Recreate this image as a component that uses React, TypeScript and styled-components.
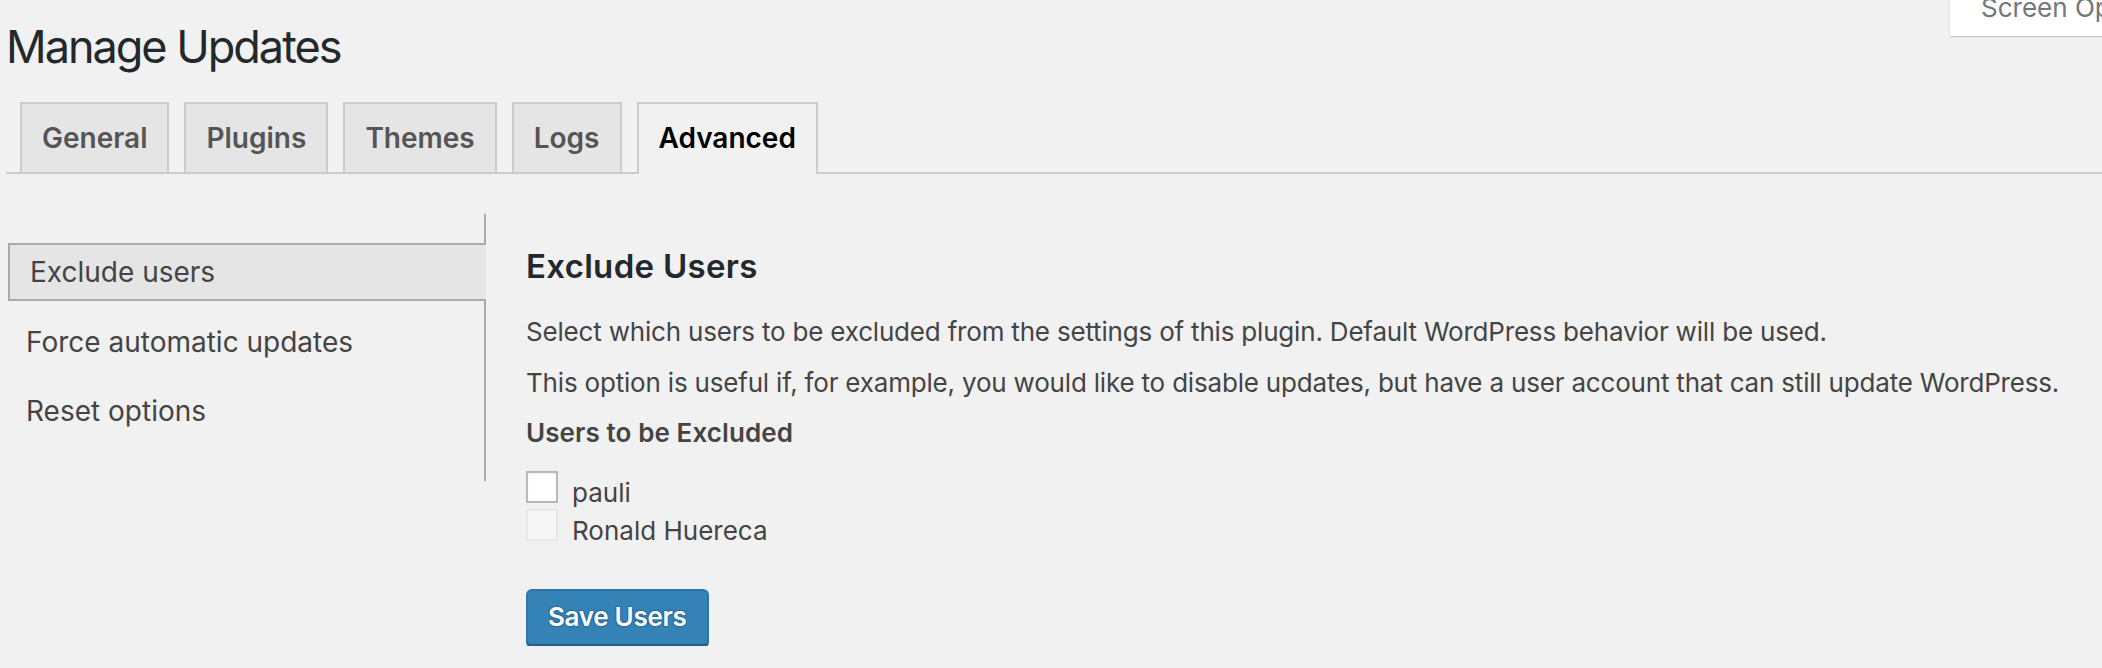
import React from "react";
import styled, { createGlobalStyle, css } from "styled-components";

const GlobalStyle = createGlobalStyle`
  html, body {
    margin: 0;
    padding: 0;
    background: #f1f1f1;
    overflow-x: hidden;
  }
  body {
    font-family: Inter, "Noto Sans", "Liberation Sans", sans-serif;
    color: #444;
  }
  *, *::before, *::after { box-sizing: border-box; }
`;

const Page = styled.div`
  padding-left: 6px;
`;

const TitleRow = styled.header`
  display: flex;
  align-items: flex-start;
`;

const Title = styled.h1`
  margin: 0;
  padding: 18px 0 8px;
  font-size: 45px;
  line-height: 58px;
  font-weight: 400;
  letter-spacing: -2px;
  color: #23282d;
`;

const ScreenOptions = styled.button`
  margin-left: auto;
  margin-top: -12px;
  margin-right: -130px;
  width: 283px;
  padding: 0 0 9px 31px;
  border: none;
  border-left: 1px solid #e2e2e2;
  background: #fff;
  box-shadow: 0 2px 1px -1px rgba(0, 0, 0, 0.18);
  font-family: inherit;
  font-size: 26px;
  line-height: 39px;
  color: #72777c;
  text-align: left;
  white-space: nowrap;
`;

const TabBar = styled.nav`
  display: flex;
  align-items: flex-end;
  gap: 15px;
  padding: 18px 0 0 14px;
  border-bottom: 2px solid #ccc;
`;

const Tab = styled.a<{ $active?: boolean }>`
  display: block;
  padding: 10px 20px;
  font-size: 28px;
  line-height: 48px;
  font-weight: 600;
  border: 2px solid #ccc;
  border-bottom: none;
  text-decoration: none;
  background: #e5e5e5;
  color: #555;
  ${(p) =>
    p.$active &&
    css`
      background: #f1f1f1;
      color: #000;
      padding-bottom: 12px;
      margin-bottom: -2px;
    `}
`;

const Body = styled.div`
  display: flex;
  align-items: flex-start;
  padding: 40px 0 0 2px;
`;

const Sidebar = styled.ul`
  list-style: none;
  margin: 0;
  padding: 29px 0 41px;
  width: 478px;
  flex: none;
  border-right: 2px solid #aaa;
  display: flex;
  flex-direction: column;
  gap: 11.5px;
`;

const SideItem = styled.li<{ $active?: boolean }>`
  height: 58px;
  display: flex;
  align-items: center;
  padding-left: 18px;
  font-size: 28px;
  color: #444;
  ${(p) =>
    p.$active &&
    css`
      padding-left: 20px;
      background: #e5e5e5;
      border: 2px solid #aaa;
      border-right: none;
      margin-right: -2px;
    `}
`;

const Content = styled.section`
  padding: 32px 0 0 40px;
`;

const Heading = styled.h2`
  margin: 0 0 26px;
  font-size: 33px;
  line-height: 40px;
  font-weight: 600;
  letter-spacing: 0.3px;
  color: #23282d;
`;

const Desc = styled.p`
  margin: 0 0 11.5px;
  font-size: 26px;
  line-height: 39px;
  letter-spacing: -0.19px;
  color: #444;
`;

const Subheading = styled.p`
  margin: 0 0 19px;
  font-size: 26px;
  line-height: 39px;
  font-weight: 600;
  letter-spacing: 0.1px;
  color: #444;
`;

const UserList = styled.div`
  display: flex;
  flex-direction: column;
  gap: 6px;
`;

const UserRow = styled.label`
  display: flex;
  align-items: flex-start;
  gap: 14px;
  height: 32px;
`;

const Checkbox = styled.input.attrs({ type: "checkbox" })`
  appearance: none;
  -webkit-appearance: none;
  margin: 0;
  width: 32px;
  height: 32px;
  flex: none;
  border: 2px solid #b4b9be;
  background: #fff;
  border-radius: 0;
  box-shadow: inset 0 1px 2px rgba(0, 0, 0, 0.07);
  &:disabled {
    border-color: #e6e7e8;
    background: #f6f6f6;
    box-shadow: none;
  }
`;

const UserName = styled.span`
  margin-top: 5.5px;
  font-size: 26px;
  line-height: 32px;
  color: #444;
`;

const PrimaryButton = styled.button`
  margin-top: 48px;
  height: 57px;
  padding: 0 20px 2px;
  font-family: inherit;
  font-size: 26px;
  font-weight: 600;
  letter-spacing: -0.3px;
  color: #fff;
  background: #3582b6;
  border: 2px solid #2f75a8;
  border-bottom-color: #255f8c;
  border-radius: 6px;
  box-shadow: 0 2px 0 #29679a;
  text-shadow: 0 -1px 1px #2a6a9b, 1px 0 1px #2a6a9b, 0 1px 1px #2a6a9b,
    -1px 0 1px #2a6a9b;
`;

const tabs = ["General", "Plugins", "Themes", "Logs", "Advanced"];
const sideItems = ["Exclude users", "Force automatic updates", "Reset options"];

export default function App() {
  return (
    <>
      <GlobalStyle />
      <Page>
        <TitleRow>
          <Title>Manage Updates</Title>
          <ScreenOptions>Screen Options</ScreenOptions>
        </TitleRow>
        <TabBar>
          {tabs.map((t) => (
            <Tab key={t} $active={t === "Advanced"}>
              {t}
            </Tab>
          ))}
        </TabBar>
        <Body>
          <Sidebar>
            {sideItems.map((s, i) => (
              <SideItem key={s} $active={i === 0}>
                {s}
              </SideItem>
            ))}
          </Sidebar>
          <Content>
            <Heading>Exclude Users</Heading>
            <Desc>
              Select which users to be excluded from the settings of this plugin. Default
              WordPress behavior will be used.
            </Desc>
            <Desc>
              This option is useful if, for example, you would like to disable updates, but
              have a user account that can still update WordPress.
            </Desc>
            <Subheading>Users to be Excluded</Subheading>
            <UserList>
              <UserRow>
                <Checkbox />
                <UserName>pauli</UserName>
              </UserRow>
              <UserRow>
                <Checkbox disabled />
                <UserName>Ronald Huereca</UserName>
              </UserRow>
            </UserList>
            <PrimaryButton>Save Users</PrimaryButton>
          </Content>
        </Body>
      </Page>
    </>
  );
}
